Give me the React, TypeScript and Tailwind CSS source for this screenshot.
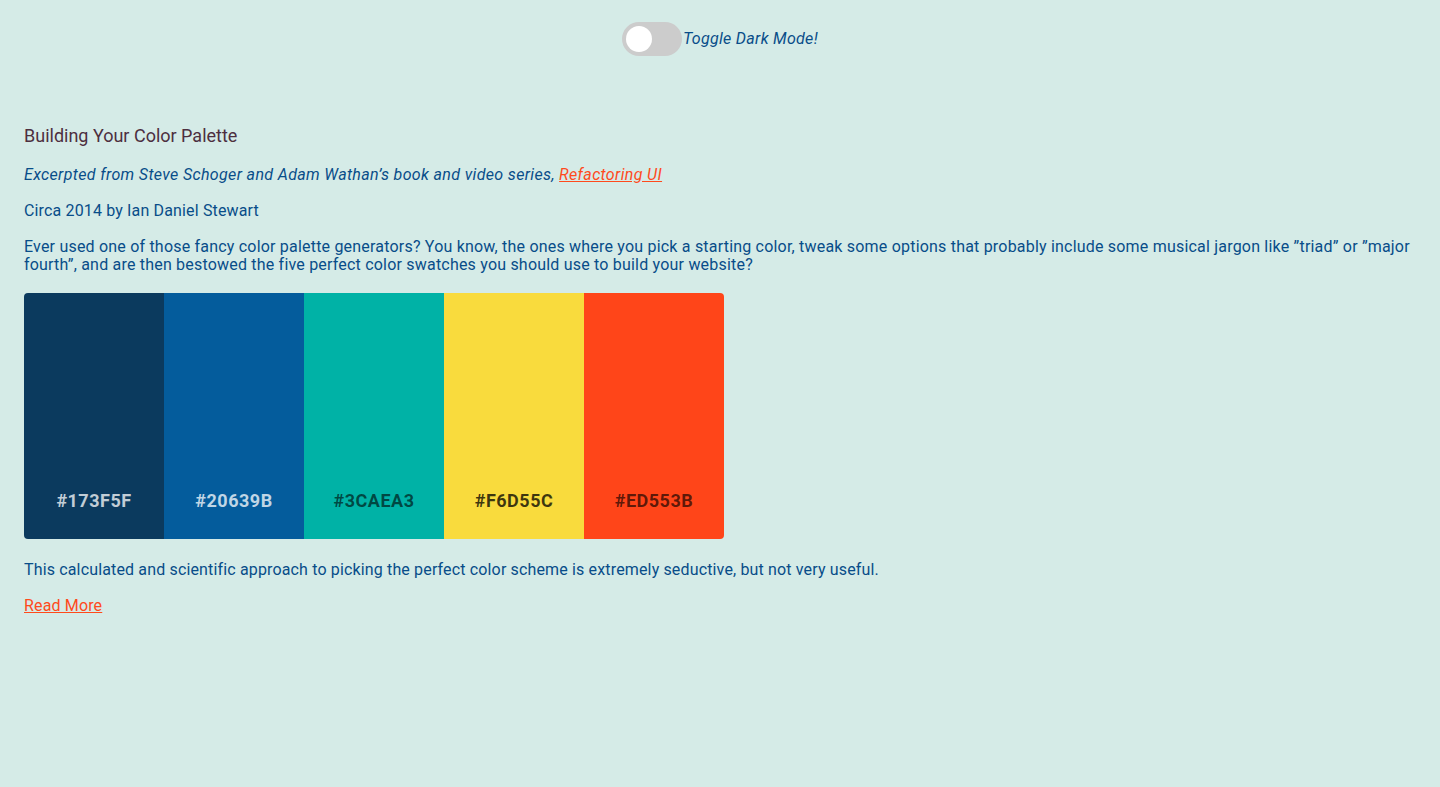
const swatches = [
  { hex: "#173F5F", bg: "bg-[#0b3a5e]", text: "text-white/75" },
  { hex: "#20639B", bg: "bg-[#045c9c]", text: "text-white/75" },
  { hex: "#3CAEA3", bg: "bg-[#00b2a6]", text: "text-black/60" },
  { hex: "#F6D55C", bg: "bg-[#f9db3d]", text: "text-black/75" },
  { hex: "#ED553B", bg: "bg-[#ff4519]", text: "text-black/65" },
];

const App = () => {
  return (
    <div className="min-h-screen bg-[#d5ebe7] text-[#084d89] font-['Roboto',sans-serif] text-base tracking-[0.15px]">
      {/* Toggle */}
      <div className="flex items-center justify-center pt-[22px]">
        <button
          type="button"
          className="w-[60px] h-[34px] rounded-full bg-[#cccccc] flex items-center px-[4px]"
        >
          <span className="w-[26px] h-[26px] rounded-full bg-white block" />
        </button>
        <span className="italic text-base ml-[1px] tracking-[0.3px]">Toggle Dark Mode!</span>
      </div>

      <main className="px-6 pt-[68px] flex flex-col gap-[13px]">
        <h1 className="text-lg leading-6 text-[#4d2f3f] tracking-normal">
          Building Your Color Palette
        </h1>
        <p className="italic tracking-[0.35px] mt-[2px]">
          Excerpted from Steve Schoger and Adam Wathan’s book and video series,{" "}
          <a href="#" className="text-[#ff4a1c] underline">
            Refactoring UI
          </a>
        </p>
        <p className="mt-[-1px]">Circa 2014 by Ian Daniel Stewart</p>
        <p className="leading-[18px] mt-[2px] tracking-[0.2px]">
          Ever used one of those fancy color palette generators? You know, the ones where you pick a
          starting color, tweak some options that probably include some musical jargon like ”triad”
          or ”major fourth”, and are then bestowed the five perfect color swatches you should use to
          build your website?
        </p>

        {/* Palette */}
        <div className="flex w-[700px] h-[246px] rounded-[4px] overflow-hidden mt-[6px]">
          {swatches.map((s) => (
            <div
              key={s.hex}
              className={`flex-1 flex items-end justify-center pb-[24px] ${s.bg}`}
            >
              <span className={`font-bold text-lg tracking-[0.5px] ${s.text}`}>{s.hex}</span>
            </div>
          ))}
        </div>

        <p className="mt-[6px]">
          This calculated and scientific approach to picking the perfect color scheme is extremely
          seductive, but not very useful.
        </p>
        <a href="#" className="text-[#ff4a1c] underline self-start mt-[-1px]">
          Read More
        </a>
      </main>
    </div>
  );
};

export default App;
